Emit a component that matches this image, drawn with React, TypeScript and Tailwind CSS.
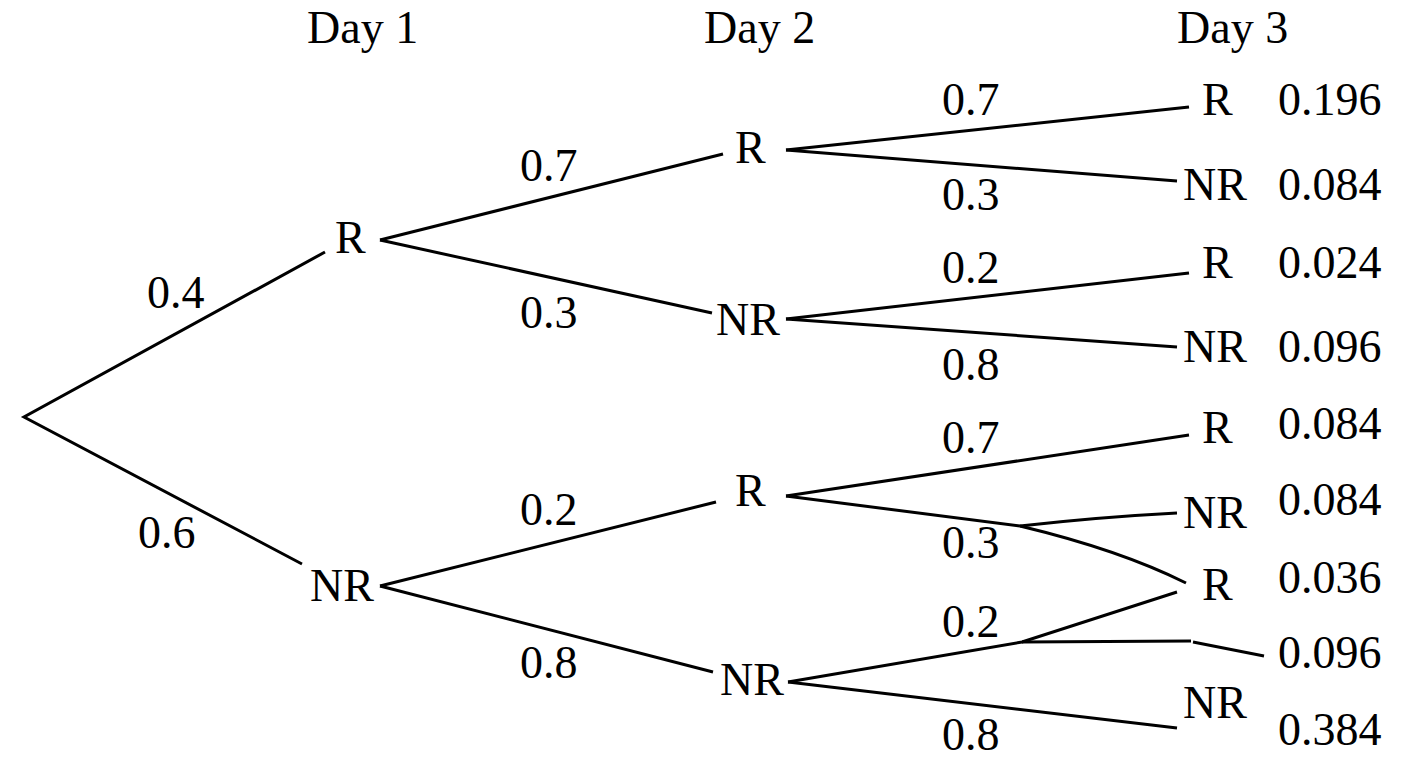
import React from 'react'

// Probability tree: labels sit over an svg that holds the branches
function Label({ className, children }: { className: string; children: React.ReactNode }) {
  return (
    <span className={`absolute whitespace-nowrap text-[46px] leading-none text-black [font-family:Liberation_Serif,Times_New_Roman,DejaVu_Serif,serif] ${className}`}>
      {children}
    </span>
  )
}

export default function App() {
  return (
    <div className="relative h-[768px] w-[1408px] overflow-hidden bg-white font-serif">
      <svg className="absolute inset-0" width="1408" height="768" viewBox="0 0 1408 768" fill="none">
        <g stroke="#000" strokeWidth="3" strokeLinecap="butt" strokeLinejoin="miter">
          {/* day 1 */}
          <polyline points="325,252 24,417 302,564" />
          {/* day 2 */}
          <line x1="380" y1="240" x2="723" y2="154" />
          <line x1="380" y1="240" x2="712" y2="313" />
          <line x1="380" y1="586" x2="716" y2="502" />
          <line x1="380" y1="586" x2="713" y2="672" />
          {/* day 3, top half */}
          <line x1="786" y1="150" x2="1189" y2="107" />
          <line x1="786" y1="150" x2="1177" y2="181" />
          <line x1="786" y1="319" x2="1189" y2="273" />
          <line x1="786" y1="319" x2="1177" y2="347" />
          {/* day 3, bottom half */}
          <line x1="786" y1="496" x2="1189" y2="435" />
          <line x1="786" y1="496" x2="1020" y2="526" />
          <path d="M1020 526 Q1100 517 1177 513" />
          <path d="M1020 526 Q1120 550 1186 583" />
          <polyline points="788,682 1022,642 1177,592" />
          <line x1="1022" y1="642" x2="1191" y2="641" />
          <line x1="1193" y1="642" x2="1264" y2="656" />
          <line x1="788" y1="682" x2="1177" y2="728" />
        </g>
      </svg>

      {/* headings */}
      <Label className="left-[307px] top-[5px]">Day 1</Label>
      <Label className="left-[704px] top-[5px]">Day 2</Label>
      <Label className="left-[1177px] top-[5px]">Day 3</Label>

      {/* day 1 */}
      <Label className="left-[147px] top-[270px]">0.4</Label>
      <Label className="left-[138px] top-[510px]">0.6</Label>
      <Label className="left-[335px] top-[215px]">R</Label>
      <Label className="left-[310px] top-[563px]">NR</Label>

      {/* day 2 */}
      <Label className="left-[520px] top-[143px]">0.7</Label>
      <Label className="left-[520px] top-[290px]">0.3</Label>
      <Label className="left-[520px] top-[487px]">0.2</Label>
      <Label className="left-[520px] top-[640px]">0.8</Label>
      <Label className="left-[735px] top-[125px]">R</Label>
      <Label className="left-[716px] top-[297px]">NR</Label>
      <Label className="left-[735px] top-[468px]">R</Label>
      <Label className="left-[720px] top-[657px]">NR</Label>

      {/* day 3 branches */}
      <Label className="left-[942px] top-[77px]">0.7</Label>
      <Label className="left-[942px] top-[172px]">0.3</Label>
      <Label className="left-[942px] top-[245px]">0.2</Label>
      <Label className="left-[942px] top-[342px]">0.8</Label>
      <Label className="left-[942px] top-[415px]">0.7</Label>
      <Label className="left-[942px] top-[520px]">0.3</Label>
      <Label className="left-[942px] top-[599px]">0.2</Label>
      <Label className="left-[942px] top-[712px]">0.8</Label>

      {/* day 3 outcomes */}
      <Label className="left-[1202px] top-[77px]">R</Label>
      <Label className="left-[1183px] top-[162px]">NR</Label>
      <Label className="left-[1202px] top-[240px]">R</Label>
      <Label className="left-[1183px] top-[324px]">NR</Label>
      <Label className="left-[1202px] top-[405px]">R</Label>
      <Label className="left-[1183px] top-[490px]">NR</Label>
      <Label className="left-[1202px] top-[562px]">R</Label>
      <Label className="left-[1183px] top-[680px]">NR</Label>

      {/* joint probabilities */}
      <Label className="left-[1278px] top-[77px]">0.196</Label>
      <Label className="left-[1278px] top-[162px]">0.084</Label>
      <Label className="left-[1278px] top-[240px]">0.024</Label>
      <Label className="left-[1278px] top-[324px]">0.096</Label>
      <Label className="left-[1278px] top-[401px]">0.084</Label>
      <Label className="left-[1278px] top-[477px]">0.084</Label>
      <Label className="left-[1278px] top-[555px]">0.036</Label>
      <Label className="left-[1278px] top-[630px]">0.096</Label>
      <Label className="left-[1278px] top-[707px]">0.384</Label>
    </div>
  )
}
